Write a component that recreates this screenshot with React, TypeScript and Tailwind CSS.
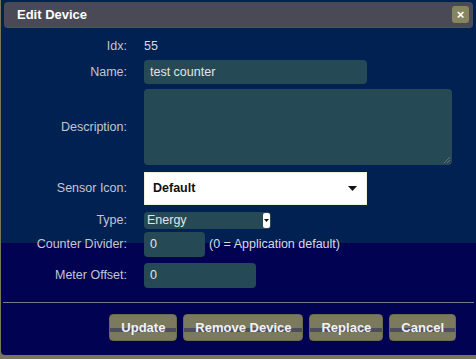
import React from "react";

const labelCls = "w-[126px] shrink-0 text-right text-[12.5px] text-[#c4c6d0]";
const inputCls =
  "ml-[17px] rounded-[4px] bg-[#264a55] text-[12.5px] text-[#e2e4e8] flex items-center px-[6px]";

function Row({
  label,
  className,
  children,
}: {
  label: string;
  className: string;
  children: React.ReactNode;
}) {
  return (
    <div className={"flex items-center " + className}>
      <div className={labelCls}>{label}</div>
      {children}
    </div>
  );
}

function Btn({ children }: { children: React.ReactNode }) {
  return (
    <button className="h-[27px] rounded-[4px] px-[11px] text-[13px] font-bold text-[#f2f2f6] bg-[linear-gradient(to_bottom,#7b7a5c_0,#7b7a5c_13px,#4d4d62_13px,#4d4d62_17px,#7b7a5c_17px)] border border-[#6c6b52]">
      {children}
    </button>
  );
}

export default function App() {
  return (
    <div className="w-[476px] h-[359px] overflow-hidden bg-[#78775a] font-['Liberation_Sans',Arial,sans-serif]">
      <div className="ml-px h-[355px] rounded-bl-[4px] bg-[linear-gradient(to_bottom,#012153_0,#012153_243px,#020253_243px)] pt-[2px] flex flex-col">
        {/* title bar */}
        <div className="mx-[3px] h-[26px] rounded-[4px] bg-[#4a4a56] border-b border-[#3e5a5c] flex items-center justify-between pl-[13px] pr-[4px]">
          <span className="text-[13px] font-bold text-white">Edit Device</span>
          <div className="w-[17px] h-[17px] rounded-[3px] bg-[#86855f] flex items-center justify-center">
            <span className="text-[13px] leading-none font-bold text-white">×</span>
          </div>
        </div>

        <Row label="Idx:" className="mt-[9px] h-[18px]">
          <span className="ml-[17px] text-[12.5px] text-[#d8dae0]">55</span>
        </Row>

        <Row label="Name:" className="mt-[5px] h-[24px]">
          <div className={inputCls + " w-[223px] h-[24px] px-[5px]"}>test counter</div>
        </Row>

        <Row label="Description:" className="mt-[5px] h-[76px]">
          <div className={inputCls + " w-[308px] h-[76px] relative"}>
            <svg className="absolute right-[1px] bottom-[1px]" width="8" height="8" viewBox="0 0 8 8">
              <path d="M7 1 L1 7 M7 4 L4 7" stroke="#6b6b88" strokeWidth="1" />
            </svg>
          </div>
        </Row>

        <Row label="Sensor Icon:" className="mt-[7px] h-[33px]">
          <div className="ml-[17px] w-[223px] h-[33px] bg-white border border-[#f0f0d8] flex items-center justify-between pl-[8px] pr-[9px]">
            <span className="text-[12.5px] font-bold text-[#111]">Default</span>
            <svg width="9" height="5" viewBox="0 0 9 5">
              <path d="M0 0 H9 L4.5 5 Z" fill="#111" />
            </svg>
          </div>
        </Row>

        <Row label="Type:" className="mt-[7px] h-[16px]">
          <div className="ml-[17px] w-[127px] h-[17px] rounded-[4px] bg-[#264a55] flex items-center justify-between pl-[3px]">
            <span className="text-[12.5px] text-[#e2e4e8]">Energy</span>
            <div className="w-[7px] h-[15px] mr-px rounded-[2px] bg-white flex items-center justify-center">
              <svg width="5" height="3" viewBox="0 0 5 3">
                <path d="M0 0 H5 L2.5 3 Z" fill="#111" />
              </svg>
            </div>
          </div>
        </Row>

        <Row label="Counter Divider:" className="mt-[4px] h-[25px]">
          <div className={inputCls + " w-[61px] h-[25px]"}>0</div>
          <span className="ml-[4px] text-[12.5px] text-[#d8dae0]">(0 = Application default)</span>
        </Row>

        <Row label="Meter Offset:" className="mt-[6px] h-[25px]">
          <div className={inputCls + " w-[112px] h-[25px]"}>0</div>
        </Row>

        <div className="mt-[14px] mx-[2px] h-px bg-[#7a7a88]" />

        <div className="mt-[11px] flex justify-end gap-[6px] pr-[20px]">
          <Btn>Update</Btn>
          <Btn>Remove Device</Btn>
          <Btn>Replace</Btn>
          <Btn>Cancel</Btn>
        </div>
      </div>
    </div>
  );
}
